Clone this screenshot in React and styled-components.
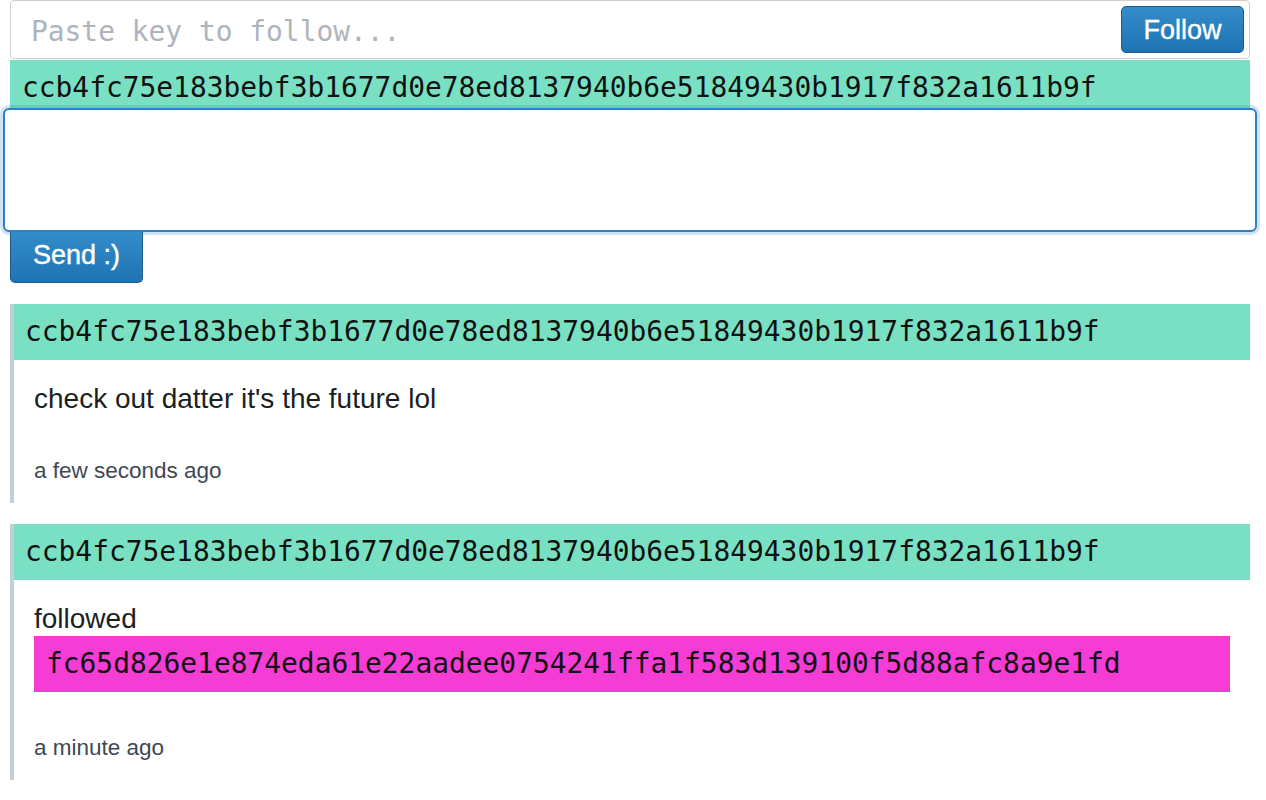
import React from "react";
import styled, { createGlobalStyle } from "styled-components";

const GlobalStyle = createGlobalStyle`
    body {
        margin: 0;
        background: #fff;
        font-family: "Liberation Sans", Arial, sans-serif;
    }
`;

const mono = `"DejaVu Sans Mono", "Liberation Mono", monospace`;

const Page = styled.div`
    padding: 0 16px 0 10px;
`;

// follow bar
const FollowBar = styled.div`
    display: flex;
    align-items: center;
    height: 59px;
    box-sizing: border-box;
    border: 1px solid #cfcfcf;
    border-radius: 4px;
    padding: 0 5px 0 20px;
`;

const KeyInput = styled.input`
    flex: 1;
    min-width: 0;
    border: none;
    outline: none;
    background: transparent;
    font-family: ${mono};
    font-size: 27.9px;
    color: #222;
    padding: 4px 0 0;
    &::placeholder {
        color: #adb4bc;
    }
`;

const BlueButton = styled.button`
    box-sizing: border-box;
    font-family: "Liberation Sans", Arial, sans-serif;
    font-size: 27px;
    color: #fff;
    -webkit-text-stroke: 0.4px #fff;
    background: linear-gradient(#348cca, #1f74b3);
    border: 1px solid #1b5c8f;
    padding: 0;
    cursor: pointer;
`;

const FollowButton = styled(BlueButton)`
    width: 123px;
    height: 47px;
    border-radius: 5px;
    padding-top: 2px;
`;

const SendButton = styled(BlueButton)`
    display: block;
    width: 133px;
    height: 51px;
    border-radius: 0 0 5px 5px;
    border-top: none;
    padding-bottom: 3px;
`;

const KeyBar = styled.div`
    margin-top: 1px;
    padding: 8px 12px 0;
    line-height: 40px;
    background: #79e0c3;
    font-family: ${mono};
    font-size: 27.9px;
    color: #111;
`;

const Composer = styled.textarea`
    display: block;
    box-sizing: border-box;
    width: calc(100% + 14px);
    height: 124px;
    margin: 0 -7px;
    border: 2px solid #2f80c2;
    border-radius: 6px;
    box-shadow: 0 0 0 3px rgba(47, 128, 194, 0.22);
    outline: none;
    resize: none;
    font-family: "Liberation Sans", Arial, sans-serif;
    font-size: 24px;
`;

// feed
const Feed = styled.div`
    display: flex;
    flex-direction: column;
    gap: 21px;
    margin-top: 21px;
`;

const Post = styled.div`
    border-left: 4px solid #c5ced7;
`;

const PostHead = styled.div`
    background: ${(p) => p.$bg || "#79e0c3"};
    line-height: 56px;
    padding-left: ${(p) => p.$pad || 11}px;
    font-family: ${mono};
    font-size: 27.9px;
    color: #111;
    white-space: nowrap;
`;

const PostBody = styled.div`
    padding: 23px 20px 20px;
`;

const Message = styled.div`
    font-size: 28px;
    line-height: 32px;
    color: #1b1f24;
`;

const FollowedKey = styled(PostHead)`
    margin-top: 1px;
`;

const Stamp = styled.div`
    margin-top: 43px;
    font-size: 22.5px;
    line-height: 25px;
    color: #3e4955;
`;

const ME = "ccb4fc75e183bebf3b1677d0e78ed8137940b6e51849430b1917f832a1611b9f";

const posts = [
    { id: 1, text: "check out datter it's the future lol", when: "a few seconds ago" },
    {
        id: 2,
        text: "followed",
        followed: "fc65d826e1e874eda61e22aadee0754241ffa1f583d139100f5d88afc8a9e1fd",
        when: "a minute ago",
    },
];

const App = () => {
    return (
        <Page>
            <GlobalStyle />
            <FollowBar>
                <KeyInput placeholder="Paste key to follow..." />
                <FollowButton>Follow</FollowButton>
            </FollowBar>
            <KeyBar>{ME}</KeyBar>
            <Composer />
            <SendButton>Send :)</SendButton>
            <Feed>
                {posts.map((p) => (
                    <Post key={p.id}>
                        <PostHead>{ME}</PostHead>
                        <PostBody>
                            <Message>{p.text}</Message>
                            {p.followed && (
                                <FollowedKey $bg="#f53cd5" $pad={12}>
                                    {p.followed}
                                </FollowedKey>
                            )}
                            <Stamp>{p.when}</Stamp>
                        </PostBody>
                    </Post>
                ))}
            </Feed>
        </Page>
    );
};

export default App;
